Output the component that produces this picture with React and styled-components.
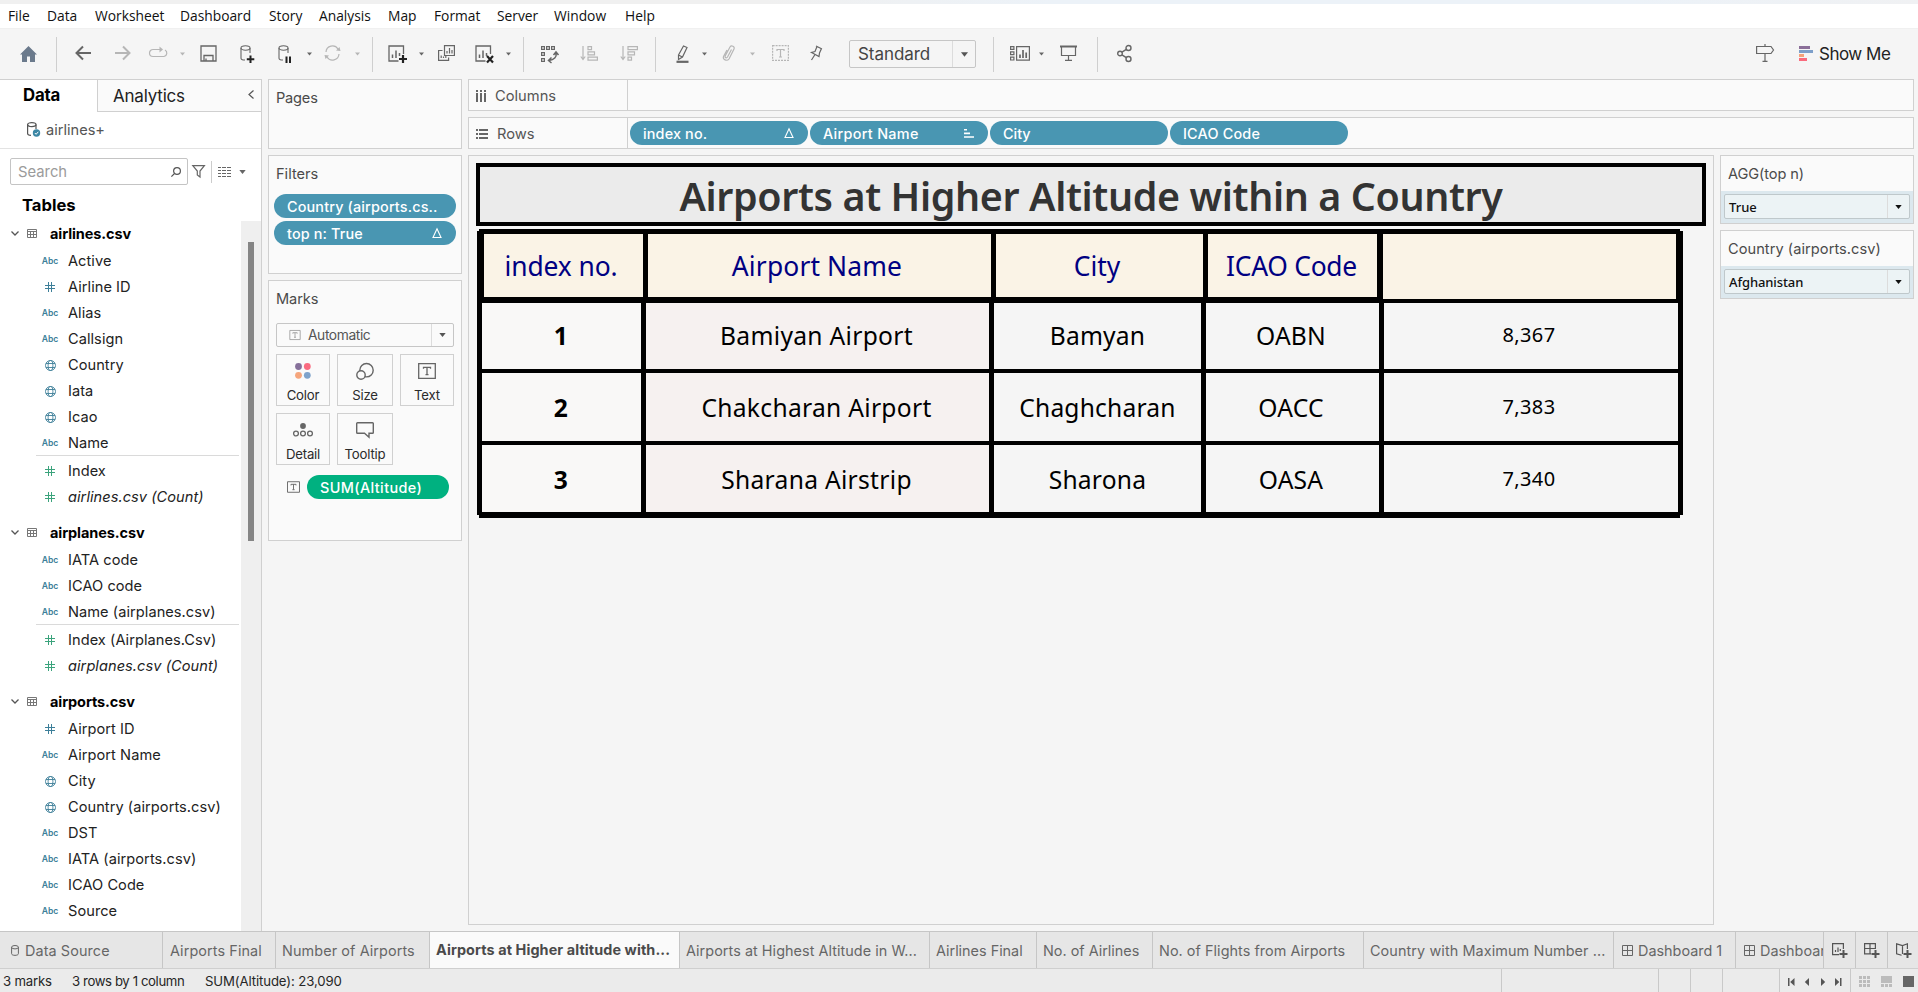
import React from 'react';
import styled, { createGlobalStyle } from 'styled-components';

const Global = createGlobalStyle`
  * { box-sizing: border-box; }
  html, body { margin: 0; padding: 0; overflow: hidden; }
  body { background: #f5f5f5; font-family: Inter, "Noto Sans", sans-serif; color: #2b2b2b; white-space: nowrap; }
  svg { display: block; overflow: visible; flex: none; }
`;

/* ---------- palette ---------- */
const line = '#d0d0d0';
const ink = '#666';
const dim = '#b6b6b6';
const teal = '#3d7f99';
const green = '#3ba37c';

/* ---------- shell ---------- */
const Page = styled.div`
  width: 1918px; height: 992px; display: flex; flex-direction: column; background: #f5f5f5; overflow: hidden;
`;
const TopStrip = styled.div`
  height: 4px; flex: none; background: linear-gradient(90deg, #f0f0f0 0 40%, #ecf2f8 55% 85%, #f0f1f3 100%);
`;
const MenuBar = styled.nav`
  height: 25px; flex: none; background: #fff; display: flex; align-items: center; padding: 0 0 1px 8px;
  font: 13.8px "Open Sans", sans-serif; color: #111; border-bottom: 1px solid #f0f0f0;
`;
const MenuItem = styled.span`width: ${p => p.$w}px; flex: none;`;

const Toolbar = styled.div`height: 50px; flex: none; display: flex; align-items: center;`;
const Tool = styled.div`
  margin-left: ${p => p.$gap}px; width: ${p => p.$w}px; height: 34px; flex: none; color: ${p => (p.$dim ? dim : ink)};
  display: flex; align-items: center; justify-content: center; padding-bottom: ${p => p.$lift || 0}px;
`;
const ToolRule = styled.div`margin-left: ${p => p.$gap}px; width: 1px; height: 35px; background: #cfcfcf; flex: none;`;
const ToolSelect = styled.div`
  margin-left: 26px; width: 127px; height: 28px; flex: none; border: 1px solid #c6c6c6; border-radius: 2px;
  display: flex; align-items: stretch; line-height: 26px; font-size: 17px; letter-spacing: -0.05px; color: #444; padding-left: 8px;
`;
const SelectArrow = styled.div`
  margin-left: auto; width: ${p => p.$w}px; border-left: 1px solid #dcdcdc; display: flex; align-items: center;
  justify-content: center; color: ${p => p.$c || '#555'};
`;
const ShowMe = styled.div`
  margin-left: 25px; padding-bottom: 1px; display: flex; align-items: center; gap: 6px; font-size: 17px; letter-spacing: -0.5px; color: #222;
`;

const Work = styled.main`display: flex; height: 852px; flex: none;`;

/* ---------- data pane ---------- */
const DataPane = styled.aside`
  width: 262px; flex: none; background: #fff; border-right: 1px solid ${line}; border-top: 1px solid ${line};
  display: flex; flex-direction: column;
`;
const PaneTabs = styled.div`height: 32px; flex: none; display: flex;`;
const PaneTab = styled.div`
  display: flex; align-items: center; padding-left: ${p => p.$pad}px; width: ${p => p.$w}px; font-size: 17px;
  letter-spacing: -0.2px; color: #222;
  ${p => (p.$on ? 'font-weight:700;color:#000;font-size:16.8px;padding-bottom:2px;'
    : `background:#fafafa;border-left:1px solid ${line};border-bottom:1px solid ${line};`)}
`;
const Chevron = styled.div`margin-left: auto; margin-right: 7px; padding-bottom: 3px;`;
const SourceRow = styled.div`
  height: 37px; flex: none; display: flex; align-items: center; gap: 5px; padding: 0 0 1px 27px; font-size: 14.6px;
  color: #555; border-bottom: 1px solid #e3e3e3;
`;
const SearchRow = styled.div`height: 27px; margin: 9px 0 0 10px; flex: none; display: flex; align-items: center;`;
const SearchBox = styled.div`
  width: 178px; height: 27px; border: 1px solid #c4c4c4; border-radius: 2px; display: flex; align-items: center;
  justify-content: space-between; padding: 0 6px 0 7px; font-size: 14.8px; color: #9b9b9b;
`;
const SearchTools = styled.div`display: flex; align-items: center; margin-left: 4px; color: ${ink};`;
const SearchRule = styled.div`width: 1px; height: 22px; background: #ccc; margin: 0 6px;`;
const TablesTitle = styled.div`
  height: 26px; margin-top: 7px; padding-left: 22px; flex: none; font: 700 16.6px/26px Inter, sans-serif; color: #000;
  letter-spacing: 0;
`;
const TreeArea = styled.div`flex: 1; min-height: 0; display: flex; margin-top: 3px; justify-content: space-between;`;
const Tree = styled.div`width: 240px; overflow: hidden;`;
const Group = styled.div`margin-bottom: 11px;`;
const GroupHead = styled.div`
  height: 26px; display: flex; align-items: center; padding-left: 11px; font-weight: 700; font-size: 14.5px;
  letter-spacing: -0.1px; color: #000; padding-bottom: 1px;
`;
const HeadTwist = styled.span`width: 16px;`;
const HeadIcon = styled.span`width: 23px;`;
const Field = styled.div`
  height: 26px; display: flex; align-items: center; padding-top: 2px; font-size: 14.6px; color: #222; letter-spacing: 0.05px;
  ${p => p.$italic && 'font-style: italic;'}
`;
const FieldType = styled.span`
  width: 68px; padding-left: 41px; height: 16px; display: flex; align-items: center; flex: none; font-style: normal;
  color: ${p => (p.$measure ? green : teal)};
`;
const TypeBox = styled.span`
  width: 18px; display: flex; justify-content: center; font: 600 8.6px/16px Inter, sans-serif; letter-spacing: -0.1px;
`;
const FieldRule = styled.div`height: 1px; margin: 0 1px 1px 36px; background: #dadada;`;
const Track = styled.div`width: 20px; background: #efefef; padding: 21px 0 0 7px;`;
const Thumb = styled.div`width: 6px; height: 299px; background: #858585;`;

/* ---------- cards ---------- */
const CardColumn = styled.div`width: 194px; margin-left: 6px; flex: none; display: flex; flex-direction: column; gap: 6px;`;
const Card = styled.section`
  height: ${p => p.$h}px; flex: none; border: 1px solid ${line}; background: #fafafa;
`;
const CardTitle = styled.h3`
  margin: 0; padding-left: 7px; height: ${p => p.$h || 36}px; font: 400 14.6px/${p => (p.$h ? 37 : 36)}px Inter, sans-serif;
  color: #4a4a4a; letter-spacing: ${p => p.$ls || 0}px;
`;
const Pill = styled.div`
  height: 24px; width: ${p => p.$w}px; border-radius: 12px; background: ${p => (p.$green ? '#00b180' : '#4996b2')};
  color: #fff; font: 500 14.4px/24px Inter, sans-serif; display: flex; align-items: center; justify-content: space-between;
  padding: 1px 14px 0 13px; flex: none; letter-spacing: ${p => p.$ls || 0}px;
`;
const PillStack = styled.div`display: flex; flex-direction: column; gap: 3px; padding: 2px 0 0 5px;`;
const MarksSelect = styled.div`
  margin: 6px 7px 0; height: 24px; border: 1px solid #c6c6c6; border-radius: 2px; display: flex; padding-left: 12px;
  align-items: center; gap: 7px; font-size: 13.8px; color: #555; letter-spacing: -0.4px;
`;
const FullArrow = styled(SelectArrow)`height: 22px;`;
const MarkGrid = styled.div`display: grid; grid-template-columns: 54px 56px 54px; gap: 7px; margin: 7px 7px 0;`;
const MarkButton = styled.div`
  height: 52px; border: 1px solid ${line}; display: flex; flex-direction: column; align-items: center;
  justify-content: space-between; padding: 5px 0 1px; font-size: 13.2px; line-height: 18px; color: #2b2b2b; letter-spacing: -0.2px;
`;
const MarkIcon = styled.div`height: 22px; display: flex; align-items: center; color: ${ink};`;
const MarkRow = styled.div`display: flex; align-items: center; gap: 7px; margin: 10px 0 0 18px; color: ${ink};`;

/* ---------- sheet ---------- */
const Right = styled.div`margin-left: 6px; width: 1446px; flex: none; display: flex; flex-direction: column; gap: 6px;`;
const Shelf = styled.div`
  height: 32px; flex: none; border: 1px solid ${line}; background: #fafafa; display: flex; align-items: center;
`;
const ShelfLabel = styled.div`
  width: 159px; height: 30px; border-right: 1px solid ${line}; display: flex; align-items: center; gap: 9px;
  padding: 2px 0 0 7px; font-size: 14.7px; color: #555;
`;
const ShelfPills = styled.div`display: flex; gap: 2px; margin-left: 2px;`;
const SheetRow = styled.div`display: flex; gap: 6px;`;
const Canvas = styled.section`width: 1246px; height: 770px; border: 1px solid ${line}; padding: 7px;`;
const TitleBox = styled.h1`
  margin: 0; width: 1230px; height: 63px; border: 4px solid #000; background: #ebebeb; text-align: center;
  font: 600 39.4px/59px "Noto Sans", sans-serif; color: #333; letter-spacing: -0.38px;
`;
const Crosstab = styled.div`
  margin: 3px 0 0 1px; width: 1206px; height: 289px; background: #000; padding: 5px 6px 6px 5px;
  display: flex; flex-direction: column; gap: 4px;
  clip-path: polygon(2px 0, 1203px 0, 1203px 2px, 100% 2px, 100% 286px, 1203px 286px, 1203px 100%, 2px 100%, 2px 286px, 0 286px, 0 2px, 2px 2px);
`;
const HeadRow = styled.div`
  display: grid; grid-template-columns: 159px 343px 207px 169px 294px; column-gap: 5px; height: 65px; padding-left: 2px;
`;
const HeadCell = styled.div`
  height: ${p => (p.$tall ? 65 : 63)}px; margin-left: ${p => (p.$tall ? 1 : 0)}px; background: #faf3e6; color: #000082; text-align: center; letter-spacing: ${p => p.$ls || 0}px;
  font: 400 26.4px/65px "Noto Sans", sans-serif; text-indent: ${p => p.$dx ?? -5}px;
`;
const BodyRow = styled.div`
  display: grid; grid-template-columns: 159px 343px 207px 173px 294px; column-gap: 5px; height: ${p => p.$h}px;
`;
const BodyCell = styled.div`
  background: ${p => p.$bg || '#f5f5f5'}; color: #000; text-align: center; font-family: "Noto Sans", sans-serif; overflow: hidden;
  font-size: ${p => (p.$num ? 20 : 24.6)}px; font-weight: ${p => (p.$bold ? 700 : 400)}; text-indent: ${p => p.$dx || 0}px;
  line-height: ${p => (p.$num ? p.$lh - 2 : p.$lh)}px; letter-spacing: ${p => (p.$num ? 0.35 : p.$ls ?? 0.2)}px;
`;
const FilterColumn = styled.div`width: 194px; display: flex; flex-direction: column; gap: 6px;`;
const FilterBody = styled.div`height: 32px; background: #dce8ee; padding: 3px;`;
const FilterSelect = styled.div`
  height: 25px; background: #ecf3f5; border: 1px solid #bfc8cb; border-radius: 2px; display: flex; padding-left: 4px;
  font: 500 13px/25px "Noto Sans", sans-serif; color: #111; letter-spacing: ${p => p.$ls || 0}px;
`;

/* ---------- bottom ---------- */
const SheetTabs = styled.footer`
  height: 38px; flex: none; display: flex; background: #e6e6e6; border-top: 1px solid #c6c6c6; border-bottom: 1px solid #cfcfcf;
`;
const SheetTab = styled.div`
  width: ${p => p.$w}px; flex: none; border-right: 1px solid #c6c6c6; padding-left: ${p => p.$pad ?? 6}px; overflow: hidden;
  display: flex; align-items: center; gap: ${p => p.$gap || 5}px; font-size: 14.4px; color: #666; letter-spacing: ${p => p.$ls || 0}px;
  ${p => p.$on && 'background:#fafafa;font-weight:700;color:#4a4a4a;padding-bottom:2px;'}
`;
const NewTab = styled.div`
  width: 32px; flex: none; border-right: 1px solid #c6c6c6; display: flex; align-items: center; justify-content: center; color: #555;
  &:last-child { border: 0; width: 31px; }
`;
const Status = styled.div`
  height: 23px; flex: none; background: #ebebeb; display: flex; font: 13.2px/25px Inter, sans-serif; color: #262626;
`;
const StatusText = styled.span`width: ${p => p.$w}px; letter-spacing: ${p => p.$ls}px; padding-left: 3px; flex: none;`;
const StatusCell = styled.div`
  width: ${p => p.$w}px; border-left: 1px solid #c9c9c9; height: 23px; display: flex; align-items: center;
  justify-content: space-between; padding: 2px ${p => p.$pr || 0}px 0 ${p => p.$pl || 0}px; flex: none; color: #555;
`;

/* ---------- icons ---------- */
const Ico = ({ w, h, children, fill = 'none', sw = 1.2 }) => (
  <svg width={w} height={h} viewBox={`0 0 ${w} ${h}`} fill={fill} stroke="currentColor" strokeWidth={sw}>{children}</svg>
);
const Caret = ({ w = 5, h = 4 }) => (
  <svg width={w} height={h} viewBox="0 0 8 5"><path d="M0 0h8L4 5z" fill="currentColor" /></svg>
);
const Home = () => (
  <svg width="17" height="16" viewBox="0 0 17 16"><path d="M8.500 0L0 8.500h2V16h5v-5.500h3V16h5V8.500h2z" fill="#6b7a8c" /></svg>
);
const Back = () => <Ico w={17} h={16} sw={2}><path d="M8 1.500L1.500 8 8 14.500M1.500 8H16" /></Ico>;
const Fwd = () => <Ico w={17} h={16} sw={2}><path d="M9 1.500L15.500 8 9 14.500M15.500 8H1" /></Ico>;
const Redo = () => (
  <Ico w={19} h={14}><path d="M11 3.500H4a3.500 3.500 0 000 7h11a3.500 3.500 0 001-6.500" /><path d="M10.500.5L14 3.500l-3.500 3z" fill="currentColor" stroke="none" /></Ico>
);
const Save = () => <Ico w={17} h={17} sw={1.3}><path d="M1 1h15v15H1zM4 16v-5.500h9V16M6 13.500v2.500" /></Ico>;
const Cylinder = ({ children }) => (
  <Ico w={15} h={18} sw={1.1}>
    <ellipse cx="5.500" cy="3" rx="4.500" ry="2.200" /><path d="M1 3v10.200c0 1 1.800 1.800 4 1.800M10 3v5" />{children}
  </Ico>
);
const AddData = () => <Cylinder><path d="M10.500 10.500v7.500M6.800 14.200h7.500" stroke="#222" strokeWidth="2" /></Cylinder>;
const PauseData = () => <Cylinder><path d="M8.500 11.500V18M12 11.500V18" stroke="#222" strokeWidth="2" /></Cylinder>;
const Refresh = () => (
  <Ico w={17} h={16}><path d="M2 7a6.500 6.500 0 0112-3M15 9a6.500 6.500 0 01-12 3" /><path d="M16.500 6l-4.500-.5L15.500 2zM.5 10l4.500.5L1.500 14z" fill="currentColor" stroke="none" /></Ico>
);
const SheetIcon = ({ children }) => (
  <Ico w={19} h={18} sw={1.300}><path d="M15.500 9V1H1v15h9.500" /><path d="M4.500 13V9.500M8 13V5.500M11.500 11V8" strokeWidth="1.500" />{children}</Ico>
);
const NewSheet = () => <SheetIcon><path d="M15 10v8M11 14h8" stroke="#222" strokeWidth="2.200" /></SheetIcon>;
const ClearSheet = () => <SheetIcon><path d="M12 11l6 6.500M18 11l-6 6.500" stroke="#222" strokeWidth="2.200" /></SheetIcon>;
const DupSheet = () => (
  <Ico w={17} h={16}><path d="M6.500.6H16.400v9.900H6.500zM4.500 5.500H.6v9.900h10v-3" /><path d="M9 8.500V6M11.500 8.500V3M14 8.500V5M3.200 13v-2.500M5.500 13v-1.500M7.800 13v-2" /></Ico>
);
const Swap = () => (
  <Ico w={18} h={17}><path d="M.6.6h2.800v2.800H.6zM5.600.6h2.800v2.800H5.600zM10.600.6h2.800v2.800h-2.800zM.6 6.600h2.800v2.800H.6zM.6 12.600h2.800v2.800H.6z" /><path d="M15 7c1 4-2 7-7 7.500M12.500 9L15 6l2.500 3M10.500 11.500l-3 3 3 2.500" strokeWidth="1.500" /></Ico>
);
const SortAsc = () => <Ico w={18} h={15}><path d="M3 0v13M.8 10.500L3 13.500l2.200-3" /><path d="M8 .6h3.500v3H8zM8 5.900h6.500v3H8zM8 11.200h9.400v3H8z" /></Ico>;
const SortDesc = () => <Ico w={18} h={15}><path d="M3 0v13M.8 10.500L3 13.500l2.200-3" /><path d="M8 .6h9.400v3H8zM8 5.900h6.500v3H8zM8 11.200h3.500v3H8z" /></Ico>;
const Highlight = () => <Ico w={13} h={18}><path d="M2.500 10L7.500 1l3.500 1.500-4.500 9.500-4 2.500zM2.500 10l3.800 2" /><path d="M.5 16.800h12" strokeWidth="2.200" /></Ico>;
const Clip = () => <Ico w={13} h={16}><path d="M9.500 4.500L5.500 12c-1 1.500-3 .6-2.300-1L8 2c1.300-2 5-.6 4 2L7 14c-2 2.500-6.500.8-5.500-2.500L5 5" /></Ico>;
const TextBox = () => <Ico w={17} h={16}><path d="M.6.6h15.800v14.800H.6z" strokeDasharray="2 1" /><path d="M5 6V4.500h7V6M8.500 4.500v7.500M7 12h3" /></Ico>;
const Pin = () => <Ico w={13} h={16}><path d="M6 1l6 3M7 1.500L5 6.500 1.500 7.500l7.500 4 .5-3.500 2-4.500M5 9.500L1.500 15" /></Ico>;
const Cards = () => (
  <Ico w={20} h={15}><path d="M.6.6h3.300v2.800H.6zM.6 5.900h3.300v2.800H.6zM.6 11.200h3.300v2.800H.6zM6.600.6h12.800v13.600H6.600z" /><path d="M10 12V8.500M13 12V4M16.200 12V6.500" strokeWidth="1.700" /></Ico>
);
const Present = () => <Ico w={17} h={16}><path d="M0 1.500h17" strokeWidth="2" /><path d="M1.500 2v8.500h14V2M8.500 10.500v5M5 15.400h7" /></Ico>;
const Share = () => <Ico w={15} h={17} sw={1.400}><circle cx="3" cy="8.500" r="2.300" /><circle cx="11.500" cy="3" r="2.500" /><circle cx="11.500" cy="14" r="2.500" /><path d="M5 7.200l4.300-2.800M5 9.800l4.300 2.800" /></Ico>;
const Sign = () => <Ico w={18} h={18}><path d="M.6 2.500h14.400L17.500 6 15 9.500H.6zM9 0v2.500M9 9.500v8M6.500 17.400h5" /></Ico>;
const ShowBars = () => (
  <svg width="14" height="15"><path d="M0 0h11v3H0z" fill="#8b6f99" /><path d="M0 4h14v3H0z" fill="#7d9fc9" /><path d="M0 8h5v3H0z" fill="#f5a27a" /><path d="M0 12h8v3H0z" fill="#fa6b7d" /></svg>
);
const SourceIcon = () => (
  <Ico w={14} h={15}><ellipse cx="4.800" cy="2.600" rx="4.200" ry="2" /><path d="M.6 2.600v8.800c0 1 1.500 1.800 3.400 2M9 2.600v4.500" /><circle cx="9.500" cy="11" r="3.700" fill="#3b86a4" stroke="none" /><path d="M7.800 11l1.300 1.300 2.200-2.500" stroke="#fff" strokeWidth="1" /></Ico>
);
const Lens = () => <svg width="10" height="10" viewBox="0 0 10 10" fill="none" stroke="#555" strokeWidth="1.200"><circle cx="6" cy="4" r="3.400" /><path d="M3.500 6.500L.4 9.600" /></svg>;
const Funnel = () => <Ico w={13} h={13}><path d="M.8.600h11.600L8 6v6L5.300 10V6z" /></Ico>;
const ListIcon = () => <Ico w={13} h={10} sw={1}><path d="M0 .5h3M4 .5h4M9 .5h4M0 3.500h3M4 3.500h4M9 3.500h4M0 6.500h3M4 6.500h4M9 6.500h4M0 9.500h3M4 9.500h4M9 9.500h4" /></Ico>;
const TableIcon = () => <svg width="10" height="9" viewBox="0 0 10 9" fill="none" stroke="#777" strokeWidth="1"><path d="M.5 .5h9v8h-9zM0 2.500h10M0 5.500h10M3.500 2.500v6M6.500 2.500v6" /></svg>;
const Twist = () => <svg width="8" height="5" viewBox="0 0 8 5" fill="none" stroke="#555" strokeWidth="1.300"><path d="M.5.5L4 4 7.500.5" /></svg>;
const Hash = () => <Ico w={10} h={10} sw={1}><path d="M3.500 0v10M6.500 0v10M0 3.500h10M0 6.500h10" /></Ico>;
const Globe = () => <Ico w={11} h={11} sw={0.9}><circle cx="5.500" cy="5.500" r="5" /><ellipse cx="5.500" cy="5.500" rx="2.400" ry="5" /><path d="M1 3.500h9M1 7.500h9" /></Ico>;
const Delta = () => <svg width="10" height="11" viewBox="0 0 10 11" fill="none" stroke="#fff" strokeWidth="1.100"><path d="M5 .8L9 9.500H1z" /></svg>;
const PillSort = () => <svg width="10" height="9" viewBox="0 0 10 9"><path d="M0 0h3v1.600H0zM0 3.600h6v1.600H0zM0 7.200h10v1.600H0z" fill="#fff" /></svg>;
const TIcon = ({ w, h, c }) => (
  <svg width={w} height={h} viewBox="0 0 18 16" fill="none" stroke={c || '#666'} strokeWidth="1.300"><path d="M.7.700h16.600v14.600H.7zM5.500 5.800V4.300h7v1.500M9 4.300v7.200M7.500 11.700h3" /></svg>
);
const ColumnsIcon = () => <svg width="10" height="12"><path d="M0 0h2v2H0zM4 0h2v2H4zM8 0h2v2H8zM0 3h2v9H0zM4 3h2v9H4zM8 3h2v9H8z" fill="#666" /></svg>;
const RowsIcon = () => <svg width="12" height="10"><path d="M0 0h2v2H0zM3 0h9v2H3zM0 4h2v2H0zM3 4h9v2H3zM0 8h2v2H0zM3 8h9v2H3z" fill="#666" /></svg>;
const ColorIcon = () => (
  <svg width="16" height="16"><circle cx="3.500" cy="3.500" r="3.400" fill="#86709a" /><circle cx="12.300" cy="3.500" r="3.400" fill="#fa6b80" /><circle cx="3.500" cy="12.300" r="3.400" fill="#f5a57c" /><circle cx="12.300" cy="12.300" r="3.400" fill="#7fa3cb" /></svg>
);
const SizeIcon = () => <Ico w={18} h={17} sw={1.400}><circle cx="10.500" cy="7.200" r="6.700" /><circle cx="5" cy="12" r="4.200" fill="#fafafa" /></Ico>;
const DetailIcon = () => <Ico w={20} h={14} sw={1.300}><circle cx="10" cy="3" r="2.900" fill="currentColor" stroke="none" /><circle cx="3" cy="10.500" r="2.400" /><circle cx="10" cy="10.500" r="2.400" /><circle cx="17" cy="10.500" r="2.400" /></Ico>;
const TipIcon = () => <Ico w={18} h={16} sw={1.400}><path d="M1.500.7h15q.8 0 .8.800v9q0 .8-.8.800H13v4l-4.500-4h-7q-.8 0-.8-.8v-9q0-.8.800-.8z" /></Ico>;
const SmallCyl = () => <Ico w={8} h={11} sw={1}><ellipse cx="4" cy="2.200" rx="3.400" ry="1.700" /><path d="M.6 2.200v6.500c0 2.200 6.800 2.200 6.800 0V2.200" /></Ico>;
const DashIcon = () => <Ico w={11} h={11} sw={1}><path d="M.5.5h10v10H.5zM5.500.5v10M.5 5.500h10" /></Ico>;
const AddSheetTab = () => <Ico w={16} h={15} sw={1.200}><path d="M11.400 6V.6H.6v11h6.500M3.500 9V7M6 9V4.500M8.300 8V6" /><path d="M11.500 7v8M7.500 11h8" strokeWidth="2" /></Ico>;
const AddDashTab = () => <Ico w={16} h={15} sw={1.200}><path d="M11.400 6V.6H.6v10.300h6.500M6 .6v10.300M.6 5.500h10.800" /><path d="M11.500 7v8M7.500 11h8" strokeWidth="2" /></Ico>;
const AddStoryTab = () => <Ico w={16} h={15} sw={1.200}><path d="M11.400 6V.8L6.500 2.500.6.8v10l5 1.500M6.500 2.500V11" /><path d="M11.500 7v8M7.500 11h8" strokeWidth="2" /></Ico>;
const STEPS = {
  first: 'M0 0h1.500v8H0zM6.500 0v8L2.200 4z',
  prev: 'M5 0v8L.8 4z',
  next: 'M1 0v8l4.200-4z',
  last: 'M5 0h1.500v8H5zM0 0v8l4.300-4z',
};
const Step = ({ to }) => <svg width={to === 'prev' || to === 'next' ? 6 : 7} height="8"><path d={STEPS[to]} fill="currentColor" /></svg>;
const Tiles = () => <svg width="11" height="11"><path d="M0 0h3v3H0zM4 0h3v3H4zM8 0h3v3H8zM0 4h3v3H0zM4 4h3v3H4zM8 4h3v3H8zM0 8h3v3H0zM4 8h3v3H4zM8 8h3v3H8z" fill="#bcbcbc" /></svg>;
const Film = () => <svg width="11" height="11"><path d="M0 0h11v7H0zM0 8h3v3H0zM4 8h3v3H4zM8 8h3v3H8z" fill="#bcbcbc" /></svg>;
const Solid = () => <svg width="11" height="11"><path d="M0 0h11v11H0z" fill="#666" /></svg>;

/* ---------- data ---------- */
const MENU = [['File', 39], ['Data', 48], ['Worksheet', 85], ['Dashboard', 89], ['Story', 50], ['Analysis', 69], ['Map', 46], ['Format', 63], ['Server', 57], ['Window', 71], ['Help', 40]];
const GROUPS = [
  { name: 'airlines.csv', dims: [['Abc', 'Active'], ['#', 'Airline ID'], ['Abc', 'Alias'], ['Abc', 'Callsign'], ['geo', 'Country'], ['geo', 'Iata'], ['geo', 'Icao'], ['Abc', 'Name']], measures: ['Index', 'airlines.csv (Count)'] },
  { name: 'airplanes.csv', dims: [['Abc', 'IATA code'], ['Abc', 'ICAO code'], ['Abc', 'Name (airplanes.csv)']], measures: ['Index (Airplanes.Csv)', 'airplanes.csv (Count)'] },
  { name: 'airports.csv', dims: [['#', 'Airport ID'], ['Abc', 'Airport Name'], ['geo', 'City'], ['geo', 'Country (airports.csv)'], ['Abc', 'DST'], ['Abc', 'IATA (airports.csv)'], ['Abc', 'ICAO Code'], ['Abc', 'Source']], measures: [] },
];
const ROWS = [
  ['1', 'Bamiyan Airport', 'Bamyan', 'OABN', '8,367'],
  ['2', 'Chakcharan Airport', 'Chaghcharan', 'OACC', '7,383'],
  ['3', 'Sharana Airstrip', 'Sharona', 'OASA', '7,340'],
];
const ROW_H = [66, 68, 67];
const LINE_H = [66, 70, 70];

const TypeMark = ({ kind }) => <TypeBox>{kind === 'Abc' ? 'Abc' : kind === '#' ? <Hash /> : <Globe />}</TypeBox>;

const FieldRow = ({ kind, label, measure }) => (
  <Field $italic={label.endsWith('(Count)')}>
    <FieldType $measure={measure}><TypeMark kind={kind} /></FieldType>{label}
  </Field>
);

const FilterCard = ({ title, value, ls, vls }) => (
  <Card $h={69}>
    <CardTitle $h={35} $ls={ls}>{title}</CardTitle>
    <FilterBody><FilterSelect $ls={vls}>{value}<SelectArrow $w={22} $c="#111"><Caret w={7} h={4} /></SelectArrow></FilterSelect></FilterBody>
  </Card>
);

export default function App() {
  return (
    <Page>
      <Global />
      <TopStrip />
      <MenuBar>{MENU.map(([t, w]) => <MenuItem key={t} $w={w}>{t}</MenuItem>)}</MenuBar>
      <Toolbar>
        <Tool $gap={19} $w={18}><Home /></Tool>
        <ToolRule $gap={19} />
        <Tool $gap={18} $w={17} $lift={2}><Back /></Tool>
        <Tool $gap={22} $w={17} $dim $lift={2}><Fwd /></Tool>
        <Tool $gap={18} $w={19} $dim $lift={2}><Redo /></Tool>
        <Tool $gap={12} $w={5} $dim><Caret /></Tool>
        <Tool $gap={15} $w={17} $lift={2}><Save /></Tool>
        <Tool $gap={23} $w={15}><AddData /></Tool>
        <Tool $gap={23} $w={15}><PauseData /></Tool>
        <Tool $gap={14} $w={5}><Caret /></Tool>
        <Tool $gap={12} $w={17} $dim $lift={2}><Refresh /></Tool>
        <Tool $gap={14} $w={5} $dim><Caret /></Tool>
        <ToolRule $gap={12} />
        <Tool $gap={15} $w={19}><NewSheet /></Tool>
        <Tool $gap={12} $w={5}><Caret /></Tool>
        <Tool $gap={14} $w={17} $lift={3}><DupSheet /></Tool>
        <Tool $gap={20} $w={19}><ClearSheet /></Tool>
        <Tool $gap={12} $w={5}><Caret /></Tool>
        <ToolRule $gap={12} />
        <Tool $gap={17} $w={18}><Swap /></Tool>
        <Tool $gap={21} $w={18} $dim $lift={2}><SortAsc /></Tool>
        <Tool $gap={22} $w={18} $dim $lift={2}><SortDesc /></Tool>
        <ToolRule $gap={17} />
        <Tool $gap={20} $w={13}><Highlight /></Tool>
        <Tool $gap={13} $w={5}><Caret /></Tool>
        <Tool $gap={15} $w={13} $dim $lift={2}><Clip /></Tool>
        <Tool $gap={15} $w={5} $dim><Caret /></Tool>
        <Tool $gap={17} $w={17} $dim $lift={2}><TextBox /></Tool>
        <Tool $gap={21} $w={13} $lift={2}><Pin /></Tool>
        <ToolSelect>Standard<SelectArrow $w={23}><Caret w={7} h={5} /></SelectArrow></ToolSelect>
        <ToolRule $gap={17} />
        <Tool $gap={16} $w={20} $lift={2}><Cards /></Tool>
        <Tool $gap={9} $w={5}><Caret /></Tool>
        <Tool $gap={16} $w={17} $lift={2}><Present /></Tool>
        <ToolRule $gap={20} />
        <Tool $gap={19} $w={15} $lift={2}><Share /></Tool>
        <Tool $gap={624} $w={18} $lift={2}><Sign /></Tool>
        <ShowMe><ShowBars />Show Me</ShowMe>
      </Toolbar>
      <Work>
        <DataPane>
          <PaneTabs>
            <PaneTab $on $w={97} $pad={23}>Data</PaneTab>
            <PaneTab $w={164} $pad={15}>Analytics
              <Chevron><svg width="6" height="9" viewBox="0 0 6 9" fill="none" stroke="#555" strokeWidth="1.200"><path d="M5.500.5L1 4.500l4.500 4" /></svg></Chevron>
            </PaneTab>
          </PaneTabs>
          <SourceRow><SourceIcon />airlines+</SourceRow>
          <SearchRow>
            <SearchBox>Search<Lens /></SearchBox>
            <SearchTools><Funnel /><SearchRule /><ListIcon /><Tool $gap={8} $w={7}><Caret w={7} h={4} /></Tool></SearchTools>
          </SearchRow>
          <TablesTitle>Tables</TablesTitle>
          <TreeArea>
            <Tree>
              {GROUPS.map(g => (
                <Group key={g.name}>
                  <GroupHead><HeadTwist><Twist /></HeadTwist><HeadIcon><TableIcon /></HeadIcon>{g.name}</GroupHead>
                  {g.dims.map(([k, l]) => <FieldRow key={l} kind={k} label={l} />)}
                  {g.measures.length > 0 && <FieldRule />}
                  {g.measures.map(l => <FieldRow key={l} kind="#" label={l} measure />)}
                </Group>
              ))}
            </Tree>
            <Track><Thumb /></Track>
          </TreeArea>
        </DataPane>
        <CardColumn>
          <Card $h={70}><CardTitle $ls={-0.2}>Pages</CardTitle></Card>
          <Card $h={119}>
            <CardTitle>Filters</CardTitle>
            <PillStack>
              <Pill $w={182} $ls={0.15}>Country (airports.cs..</Pill>
              <Pill $w={182} $ls={0.15}>top n: True<Delta /></Pill>
            </PillStack>
          </Card>
          <Card $h={261}>
            <CardTitle $ls={-0.1}>Marks</CardTitle>
            <MarksSelect><TIcon w={12} h={10} c="#999" />Automatic<FullArrow $w={22}><Caret w={7} h={4} /></FullArrow></MarksSelect>
            <MarkGrid>
              <MarkButton><MarkIcon><ColorIcon /></MarkIcon>Color</MarkButton>
              <MarkButton><MarkIcon><SizeIcon /></MarkIcon>Size</MarkButton>
              <MarkButton><MarkIcon><TIcon w={18} h={16} /></MarkIcon>Text</MarkButton>
              <MarkButton><MarkIcon><DetailIcon /></MarkIcon>Detail</MarkButton>
              <MarkButton><MarkIcon><TipIcon /></MarkIcon>Tooltip</MarkButton>
            </MarkGrid>
            <MarkRow><TIcon w={13} h={12} /><Pill $w={142} $green $ls={0.4}>SUM(Altitude)</Pill></MarkRow>
          </Card>
        </CardColumn>
        <Right>
          <Shelf><ShelfLabel><ColumnsIcon />Columns</ShelfLabel></Shelf>
          <Shelf>
            <ShelfLabel><RowsIcon />Rows</ShelfLabel>
            <ShelfPills>
              <Pill $w={178} $ls={0.15}>index no.<Delta /></Pill>
              <Pill $w={178} $ls={0.3}>Airport Name<PillSort /></Pill>
              <Pill $w={178}>City</Pill>
              <Pill $w={178} $ls={0.2}>ICAO Code</Pill>
            </ShelfPills>
          </Shelf>
          <SheetRow>
            <Canvas>
              <TitleBox>Airports at Higher Altitude within a Country</TitleBox>
              <Crosstab>
                <HeadRow>
                  <HeadCell $ls={-0.1}>index no.</HeadCell>
                  <HeadCell $ls={0.15}>Airport Name</HeadCell>
                  <HeadCell>City</HeadCell>
                  <HeadCell $ls={-0.25} $dx={-2}>ICAO Code</HeadCell>
                  <HeadCell $tall />
                </HeadRow>
                {ROWS.map((r, i) => (
                  <BodyRow key={r[0]} $h={ROW_H[i]}>
                    <BodyCell $lh={LINE_H[i]} $bg="#f9f8f7" $bold $dx={-1}>{r[0]}</BodyCell>
                    <BodyCell $lh={LINE_H[i]} $bg="#f6f1f0" $dx={-2} $ls={0.3}>{r[1]}</BodyCell>
                    <BodyCell $lh={LINE_H[i]}>{r[2]}</BodyCell>
                    <BodyCell $lh={LINE_H[i]} $dx={-3}>{r[3]}</BodyCell>
                    <BodyCell $lh={LINE_H[i]} $num $dx={-4}>{r[4]}</BodyCell>
                  </BodyRow>
                ))}
              </Crosstab>
            </Canvas>
            <FilterColumn>
              <FilterCard title="AGG(top n)" value="True" ls={-0.1} />
              <FilterCard title="Country (airports.csv)" value="Afghanistan" ls={0.05} vls={-0.1} />
            </FilterColumn>
          </SheetRow>
        </Right>
      </Work>
      <SheetTabs>
        <SheetTab $w={163} $pad={11} $gap={6} $ls={0.1}><SmallCyl />Data Source</SheetTab>
        <SheetTab $w={113} $pad={7} $ls={0.1}>Airports Final</SheetTab>
        <SheetTab $w={154} $ls={0.1}>Number of Airports</SheetTab>
        <SheetTab $w={250} $on $ls={0.1}>Airports at Higher altitude with...</SheetTab>
        <SheetTab $w={250} $ls={0.05}>Airports at Highest Altitude in W...</SheetTab>
        <SheetTab $w={107}>Airlines Final</SheetTab>
        <SheetTab $w={116}>No. of Airlines</SheetTab>
        <SheetTab $w={211} $ls={0.05}>No. of Flights from Airports</SheetTab>
        <SheetTab $w={250} $ls={0.1}>Country with Maximum Number ...</SheetTab>
        <SheetTab $w={122} $pad={8}><DashIcon />Dashboard 1</SheetTab>
        <SheetTab $w={88} $pad={8}><DashIcon />Dashboard 2</SheetTab>
        <NewTab><AddSheetTab /></NewTab>
        <NewTab><AddDashTab /></NewTab>
        <NewTab><AddStoryTab /></NewTab>
      </SheetTabs>
      <Status>
        <StatusText $w={69} $ls={-0.2}>3 marks</StatusText>
        <StatusText $w={133} $ls={-0.4}>3 rows by 1 column</StatusText>
        <StatusText $w={1299} $ls={-0.12}>SUM(Altitude): 23,090</StatusText>
        <StatusCell $w={157} /><StatusCell $w={32} /><StatusCell $w={32} /><StatusCell $w={57} />
        <StatusCell $w={71} $pl={8} $pr={8}><Step to="first" /><Step to="prev" /><Step to="next" /><Step to="last" /></StatusCell>
        <StatusCell $w={68} $pl={8} $pr={4}><Tiles /><Film /><Solid /></StatusCell>
      </Status>
    </Page>
  );
}
